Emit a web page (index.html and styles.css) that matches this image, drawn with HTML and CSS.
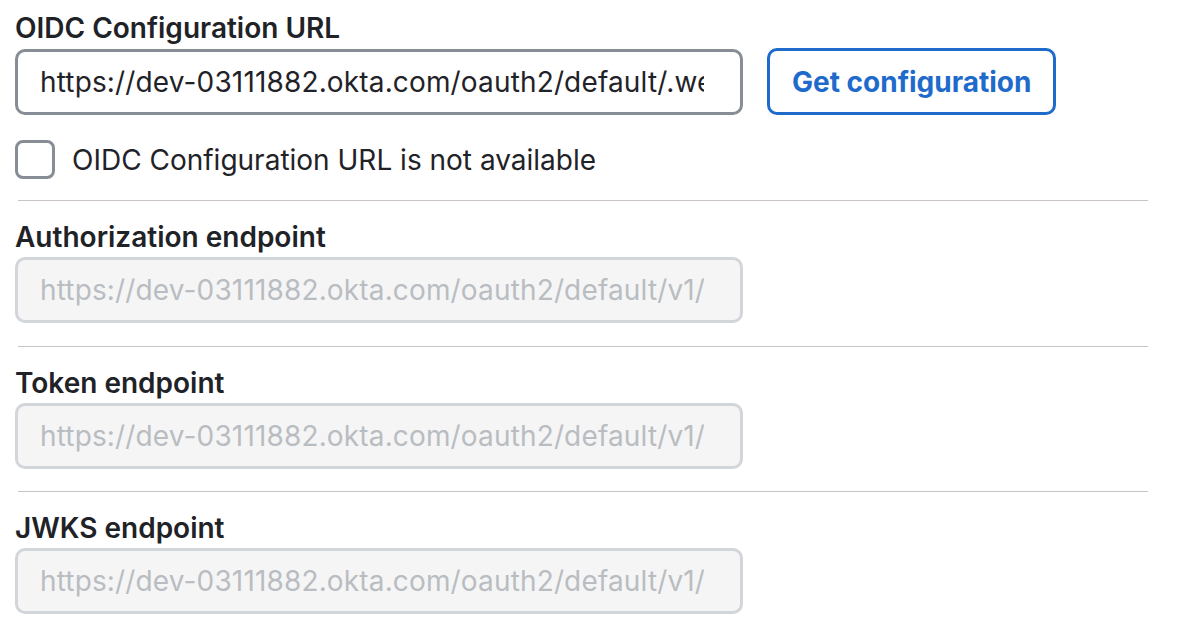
FILE: index.html
```html
<!DOCTYPE html>
<html>
<head>
<meta charset="utf-8">
<link rel="stylesheet" href="styles.css">
</head>
<body>
<div class="form">
  <div class="section first">
    <label class="label">OIDC Configuration URL</label>
    <div class="row">
      <div class="input"><span class="value">https://dev-03111882.okta.com/oauth2/default/.well-known/openid-configuration</span></div>
      <button class="btn">Get configuration</button>
    </div>
    <div class="check-row">
      <span class="checkbox"></span>
      <span class="check-label">OIDC Configuration URL is not available</span>
    </div>
  </div>
  <div class="divider"></div>
  <div class="section">
    <label class="label">Authorization endpoint</label>
    <div class="input disabled"><span class="value">https://dev-03111882.okta.com/oauth2/default/v1/authorize</span></div>
  </div>
  <div class="divider"></div>
  <div class="section">
    <label class="label">Token endpoint</label>
    <div class="input disabled"><span class="value">https://dev-03111882.okta.com/oauth2/default/v1/token</span></div>
  </div>
  <div class="divider"></div>
  <div class="section">
    <label class="label">JWKS endpoint</label>
    <div class="input disabled"><span class="value">https://dev-03111882.okta.com/oauth2/default/v1/keys</span></div>
  </div>
</div>
</body>
</html>
```
FILE: styles.css
```css
html, body {
  margin: 0;
  padding: 0;
  background: #ffffff;
}
body {
  font-family: Inter, "Noto Sans", sans-serif;
  color: #1f2328;
}
.form {
  width: 1133px;
  padding: 11px 0 0 15px;
}
.section {
  display: flex;
  flex-direction: column;
  align-items: flex-start;
  padding: 19px 0 22.5px 0;
}
.section.first {
  padding-top: 0;
  padding-bottom: 21px;
}
.divider {
  height: 1px;
  margin-left: 3px;
  background: #c9c3c3;
}
.label {
  display: block;
  font-size: 28px;
  line-height: 34px;
  font-weight: 600;
  color: #1f2328;
  margin-bottom: 3px;
}
.first .label {
  margin-bottom: 4px;
}
.row {
  display: flex;
  align-items: flex-start;
  gap: 24px;
}
.input {
  box-sizing: border-box;
  display: flex;
  align-items: center;
  width: 728px;
  height: 66px;
  border: 3px solid #878d94;
  border-radius: 10px;
  padding: 0 36px 0 22px;
  font-size: 28px;
  color: #1f2328;
}
.value {
  display: block;
  flex: 1;
  min-width: 0;
  line-height: 60px;
  white-space: nowrap;
  overflow: hidden;
  letter-spacing: 0.15px;
}
.input.disabled {
  border-color: #d2d5d9;
  background: #f5f5f5;
  color: #b9bdc2;
}
.btn {
  box-sizing: border-box;
  height: 67px;
  margin-top: -1px;
  border: 3px solid #1f6bcc;
  border-radius: 10px;
  background: #ffffff;
  color: #1f6bcc;
  font-family: Inter, "Noto Sans", sans-serif;
  font-size: 28px;
  font-weight: 700;
  padding: 0 22px;
}
.check-row {
  display: flex;
  align-items: center;
  gap: 17px;
  margin-top: 25px;
}
.checkbox {
  box-sizing: border-box;
  width: 40px;
  height: 39px;
  border: 3px solid #878d94;
  border-radius: 8px;
}
.check-label {
  font-size: 28px;
  line-height: 34px;
}
```
